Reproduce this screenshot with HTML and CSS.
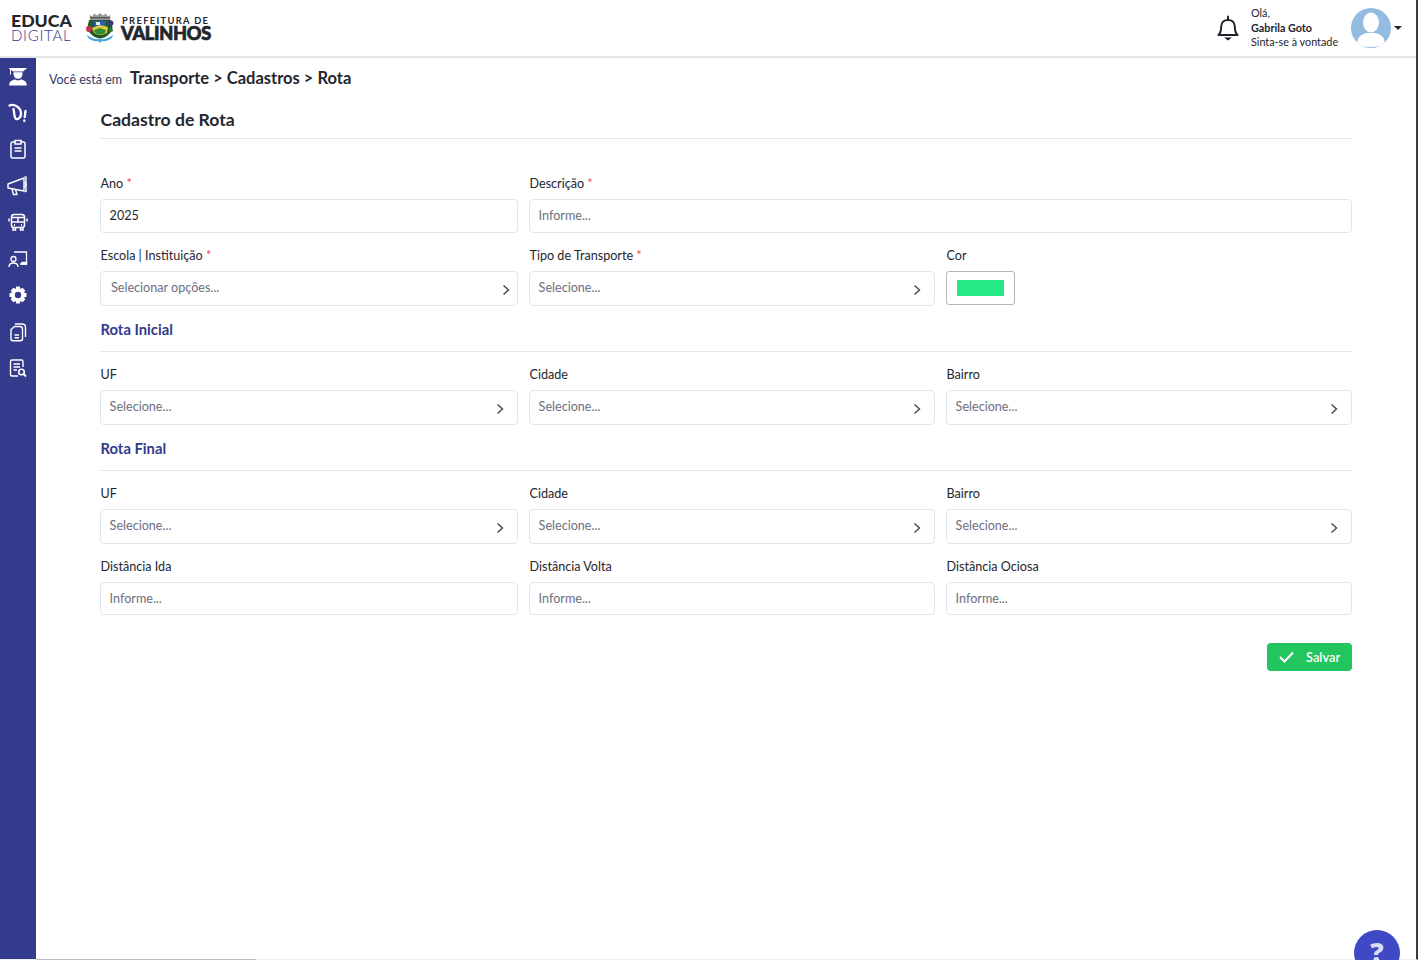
FILE: index.html
```html
<!DOCTYPE html>
<html lang="pt-BR">
<head>
<meta charset="utf-8">
<title>Cadastro de Rota</title>
<link rel="stylesheet" href="styles.css">
</head>
<body>
<header class="topbar">
  <div class="brand">
    <div class="educa"><span class="educa-top">EDUCA</span><span class="educa-bottom">DIGITAL</span></div>
    <svg class="crest" width="28" height="30" viewBox="0 0 28 30">
      <path d="M4 7 L3.500 2 L6.500 3.500 L8 0.500 L11 2.500 L14 0 L17 2.500 L20 0.500 L21.500 3.500 L24.500 2 L24 7 Z" fill="#9a9a9a"/>
      <path d="M4 4 H24 V5.500 H4 Z" fill="#5a5a5a"/>
      <path d="M3 7 H25 L26.500 14 L25 19 Q20 25 14 25.500 Q8 25 3 19 L1.500 14 Z" fill="#1f5a2a"/>
      <path d="M8 8 H20 V15 L14 16 L8 14 Z" fill="#2d5fb0"/>
      <path d="M10 9 H14 V12 H10 Z" fill="#e8eef5"/>
      <path d="M6 15 L14 12 L22 14 L21 20 Q14 24 8 20 Z" fill="#e3cc3a"/>
      <path d="M8 17 L14 15 L20 17 L19 20 Q14 23 9 20 Z" fill="#2f8a3a"/>
      <circle cx="3" cy="16" r="3" fill="#c9304a"/>
      <circle cx="25" cy="10" r="2.500" fill="#4a2f8f"/>
      <circle cx="25" cy="17" r="2" fill="#3a7a35"/>
      <path d="M1 22 Q7 27 14 26 Q21 27 27 22 L26 25 Q20 29 16 28 L14 30 L12 28 Q8 29 2 25 Z" fill="#4aa8e0"/>
    </svg>
    <div class="city"><span class="city-top">PREFEITURA DE</span><span class="city-bottom">VALINHOS</span></div>
  </div>
  <div class="user">
    <svg class="bell" width="24" height="26" viewBox="0 0 24 26" fill="none" stroke="#20212b" stroke-width="2" stroke-linejoin="round">
      <path d="M2.500 20 C5 17.500 5.200 15.500 5.200 11.500 C5.200 7.500 8 5 12 5 C16 5 18.800 7.500 18.800 11.500 C18.800 15.500 19 17.500 21.500 20 Z"/>
      <path d="M12 1.500 V5" stroke-linecap="round"/>
      <path d="M8 22.500 H16 L12 25.500 Z" fill="#20212b" stroke="none"/>
    </svg>
    <div class="greeting">
      <span>Olá,</span>
      <strong>Gabrila Goto</strong>
      <span>Sinta-se à vontade</span>
    </div>
    <svg class="avatar" width="40" height="40" viewBox="0 0 40 40">
      <defs><clipPath id="avatar-clip"><circle cx="20" cy="20" r="20"/></clipPath></defs>
      <circle cx="20" cy="20" r="20" fill="#94bce0"/>
      <g clip-path="url(#avatar-clip)" fill="#fff">
        <ellipse cx="20" cy="14.500" rx="8" ry="10"/>
        <path d="M6 37 C6 29 10 27 15 25 H25 C30 27 34 29 34 37 Q20 41 6 37 Z"/>
      </g>
    </svg>
    <span class="caret"></span>
  </div>
</header>

<div class="shell">
  <nav class="sidebar">
    <svg width="20" height="20" viewBox="0 0 20 20" fill="#fff"><path d="M0.800 2 H19.200 L15 5.500 H5 L3 3.800 V8.500 H2 V3.300 Z"/><path d="M5.500 6.300 H14.500 V8 C14.500 11 12.500 12.800 10 12.800 C7.500 12.800 5.500 11 5.500 8 Z"/><path d="M1.200 19.500 C1.200 15.500 3.500 14.500 7 13.300 C8 14.800 12 14.800 13 13.300 C16.500 14.500 18.800 15.500 18.800 19.500 Z"/></svg>
    <svg width="20" height="20" viewBox="0 0 20 20" fill="none" stroke="#fff" stroke-width="2.300" stroke-linecap="round"><path d="M1.500 2.500 C6 0.500 12.500 4 13 10 C13.300 14 10 17.500 7.500 15.500 C6 14 6.500 10 5.500 6"/><path d="M17.500 8 L16.700 14"/><path d="M16.300 17.500 V18"/></svg>
    <svg width="20" height="20" viewBox="0 0 20 20" fill="none" stroke="#fff" stroke-width="1.500"><rect x="3" y="3" width="14" height="16" rx="1.500"/><path d="M7 1.500 H13 V5 H7 Z" fill="#343a8c"/><path d="M6.500 9 H13.500 M6.500 12 H13.500"/></svg>
    <svg width="22" height="20" viewBox="0 0 22 20" fill="none" stroke="#fff" stroke-width="1.400" stroke-linejoin="round"><path d="M1 8 L17 2 V15 L1 12 Z"/><path d="M5 13 L6.500 18.500 H10 L8.500 13.500"/><path d="M17 6 Q21 8.500 17 11"/><path d="M17.500 1 H19 V15.500 H17.500" /></svg>
    <svg width="20" height="20" viewBox="0 0 20 20" fill="none" stroke="#fff" stroke-width="1.500"><rect x="3.500" y="2.500" width="13" height="13" rx="2.500"/><path d="M3.500 10 H16.500 M3.500 5.500 H16.500 M10 5.500 V10"/><path d="M5 15.500 V18 H7.500 V15.500 M12.500 15.500 V18 H15 V15.500"/><path d="M1 6.500 V9.500 M19 6.500 V9.500"/><path d="M6 13 H7 M13 13 H14" stroke-width="2"/></svg>
    <svg width="20" height="20" viewBox="0 0 20 20" fill="none" stroke="#fff" stroke-width="1.300"><path d="M6 3 H18.500 V15 H12"/><circle cx="5.500" cy="10" r="2.500"/><path d="M1 18 C1 15 3 14 5.500 14 C8 14 10 15 10 18"/><path d="M14 15 H18.500 V13.500 H14 Z" fill="#fff"/></svg>
    <svg width="20" height="20" viewBox="0 0 20 20"><path fill="#fff" fill-rule="evenodd" d="M8.200 1.500 H11.800 L12.400 4 L14.600 2.800 L17.200 5.400 L16 7.600 L18.500 8.200 V11.800 L16 12.400 L17.200 14.600 L14.600 17.200 L12.400 16 L11.800 18.500 H8.200 L7.600 16 L5.400 17.200 L2.800 14.600 L4 12.400 L1.500 11.800 V8.200 L4 7.600 L2.800 5.400 L5.400 2.800 L7.600 4 Z M10 6.800 A3.200 3.200 0 1 0 10 13.200 A3.200 3.200 0 1 0 10 6.800 Z"/></svg>
    <svg width="20" height="20" viewBox="0 0 20 20" fill="none" stroke="#fff" stroke-width="1.400" stroke-linejoin="round"><path d="M7 2 H14 C16.500 2 17.500 3.500 17.500 5.500 V15"/><path d="M3 7.500 L6.500 4.500 H12 C13.500 4.500 14.500 5.500 14.500 7 V17 C14.500 18 13.500 18.800 12.500 18.800 H5 C3.800 18.800 3 18 3 17 Z"/><path d="M6.500 13 H11 M6.500 15.800 H11"/></svg>
    <svg width="20" height="20" viewBox="0 0 20 20" fill="none" stroke="#fff" stroke-width="1.400"><path d="M10 18 H4 C3 18 2.500 17.500 2.500 16.500 V3.500 C2.500 2.500 3 2 4 2 H13.500 C14.500 2 15 2.500 15 3.500 V9"/><path d="M5.500 6 H12 M5.500 9 H12 M5.500 12 H9"/><circle cx="13.500" cy="14" r="2.800" stroke-width="1.600"/><path d="M15.500 16 L18 18.500" stroke-width="1.800"/></svg>
  </nav>

  <main class="content">
    <div class="breadcrumb"><span class="crumb-lead">Você está em</span><span class="crumb-path">Transporte &gt; Cadastros &gt; Rota</span></div>

    <section class="panel">
      <h1 class="title">Cadastro de Rota</h1>

      <div class="grid first">
        <div class="field"><label>Ano <i>*</i></label><div class="control">2025</div></div>
        <div class="field span-2"><label>Descrição <i>*</i></label><div class="control muted">Informe...</div></div>

        <div class="field"><label>Escola | Instituição <i>*</i></label><div class="control select wide muted"><span>Selecionar opções...</span><svg class="chev" width="8" height="12" viewBox="0 0 8 12"><path d="M1.500 1.500 L6.500 6 L1.500 10.500"/></svg></div></div>
        <div class="field"><label>Tipo de Transporte <i>*</i></label><div class="control select muted"><span>Selecione...</span><svg class="chev" width="8" height="12" viewBox="0 0 8 12"><path d="M1.500 1.500 L6.500 6 L1.500 10.500"/></svg></div></div>
        <div class="field"><label>Cor</label><div class="swatch"><span></span></div></div>
      </div>

      <h2 class="section">Rota Inicial</h2>
      <div class="grid">
        <div class="field"><label>UF</label><div class="control select muted"><span>Selecione...</span><svg class="chev" width="8" height="12" viewBox="0 0 8 12"><path d="M1.500 1.500 L6.500 6 L1.500 10.500"/></svg></div></div>
        <div class="field"><label>Cidade</label><div class="control select muted"><span>Selecione...</span><svg class="chev" width="8" height="12" viewBox="0 0 8 12"><path d="M1.500 1.500 L6.500 6 L1.500 10.500"/></svg></div></div>
        <div class="field"><label>Bairro</label><div class="control select muted"><span>Selecione...</span><svg class="chev" width="8" height="12" viewBox="0 0 8 12"><path d="M1.500 1.500 L6.500 6 L1.500 10.500"/></svg></div></div>
      </div>

      <h2 class="section">Rota Final</h2>
      <div class="grid">
        <div class="field"><label>UF</label><div class="control select muted"><span>Selecione...</span><svg class="chev" width="8" height="12" viewBox="0 0 8 12"><path d="M1.500 1.500 L6.500 6 L1.500 10.500"/></svg></div></div>
        <div class="field"><label>Cidade</label><div class="control select muted"><span>Selecione...</span><svg class="chev" width="8" height="12" viewBox="0 0 8 12"><path d="M1.500 1.500 L6.500 6 L1.500 10.500"/></svg></div></div>
        <div class="field"><label>Bairro</label><div class="control select muted"><span>Selecione...</span><svg class="chev" width="8" height="12" viewBox="0 0 8 12"><path d="M1.500 1.500 L6.500 6 L1.500 10.500"/></svg></div></div>
        <div class="field"><label>Distância Ida</label><div class="control short muted">Informe...</div></div>
        <div class="field"><label>Distância Volta</label><div class="control short muted">Informe...</div></div>
        <div class="field"><label>Distância Ociosa</label><div class="control short muted">Informe...</div></div>
      </div>

      <div class="actions">
        <button class="save" type="button">
          <svg width="15" height="12" viewBox="0 0 15 12" fill="none" stroke="#fff" stroke-width="2"><path d="M1 6 L5.500 10.500 L14 1.500"/></svg>
          <span>Salvar</span>
        </button>
      </div>
    </section>
  </main>
</div>

<div class="help"><span>?</span></div>
<div class="hscroll"></div>
</body>
</html>
```
FILE: styles.css
```css
* { box-sizing: border-box; }
html, body { height: 100%; }
body {
  margin: 0;
  height: 960px;
  overflow: hidden;
  display: flex;
  flex-direction: column;
  background: #fff;
  color: #25262e;
  font-family: "Lato", "Noto Sans", sans-serif;
  font-size: 12.600px;
  border-bottom: 1px solid #efefef;
  border-right: 2px solid #3a3a3a;
}

.topbar {
  flex: none;
  height: 58px;
  display: flex;
  align-items: center;
  justify-content: space-between;
  padding: 0 14px 0 11px;
  border-bottom: 2px solid #e5e5e5;
}
.brand { display: flex; align-items: center; }
.educa { display: flex; flex-direction: column; width: 61px; }
.educa-top { font-size: 17.700px; font-weight: 900; color: #25262b; line-height: 14px; }
.educa-bottom { font-size: 15px; font-weight: 300; color: #343a8c; line-height: 14px; letter-spacing: 0.700px; }
.crest { margin-left: 14px; }
.city { display: flex; flex-direction: column; margin-left: 8px; color: #25262b; }
.city-top { font-size: 9.300px; font-weight: 700; letter-spacing: 1.350px; line-height: 11px; }
.city-bottom { font-size: 18.200px; font-weight: 900; line-height: 15px; letter-spacing: -0.300px; margin-left: -1px; -webkit-text-stroke: 0.700px #25262b; }

.user { display: flex; align-items: center; }
.greeting { display: flex; flex-direction: column; margin-left: 11px; width: 100px; font-size: 10.800px; line-height: 14.500px; }
.greeting strong { font-weight: 700; }
.caret { margin-left: 3px; width: 0; height: 0; border: 4px solid transparent; border-top-color: #25262b; border-bottom-width: 0; }

.shell { flex: 1; display: flex; min-height: 0; }
.sidebar {
  flex: none;
  width: 36px;
  background: #343a8c;
  display: flex;
  flex-direction: column;
  align-items: center;
  gap: 16.500px;
  padding-top: 8px;
}
.sidebar svg { flex: none; }

.content { flex: 1; padding: 10px 64px 0 13px; }
.breadcrumb { display: flex; align-items: baseline; height: 20px; line-height: 20px; }
.crumb-lead { font-size: 12.500px; color: #343a66; margin-right: 8px; }
.crumb-path { font-size: 16.500px; font-weight: 700; color: #25262e; }

.panel { padding-left: 51px; }
.title { margin: 20px 0 0; padding: 0 0 6px 0.500px; font-size: 17.600px; line-height: 24px; font-weight: 700; color: #25262e; border-bottom: 1px solid #e3e6ee; }

.grid { display: grid; grid-template-columns: 418px 406px 406px; column-gap: 11px; }
.grid.first { margin-top: 35px; }
.span-2 { grid-column: span 2; }

.field { display: flex; flex-direction: column; padding-bottom: 13px; }
label { height: 20px; line-height: 20px; margin-bottom: 5px; padding-left: 0.500px; font-size: 12.600px; color: #25262e; }
label i { font-style: normal; color: #e8485f; }

.control {
  height: 34px;
  display: flex;
  align-items: center;
  justify-content: space-between;
  padding: 0 12px 2px 8.600px;
  border: 1px solid #e2e5ee;
  border-radius: 4px;
  font-size: 12.600px;
  color: #25262e;
}
.control.select { height: 35px; padding: 0 13px 0 8.600px; }
.control.select span { margin-top: -3px; }
.control.select .chev { margin-top: 2px; }
.control.wide { padding-left: 10px; padding-right: 7px; }
.control.short { height: 33px; padding-bottom: 0; }
.muted { color: #6c6f80; }
.chev { fill: none; stroke: #45464f; stroke-width: 1.400; }

.swatch { width: 69px; height: 34px; padding: 8px 10px; border: 1px solid #b5b5b5; border-radius: 3px; }
.swatch span { display: block; height: 16px; background: #26e884; border-radius: 1px; }

.section { margin: 0 0 13px; padding: 0 0 12px 0.500px; font-size: 14.800px; line-height: 20px; font-weight: 700; color: #343a8c; border-bottom: 1px solid #e3e6ee; }

.actions { display: flex; justify-content: flex-end; margin-top: 15px; }
.save {
  width: 85px;
  height: 28px;
  display: flex;
  align-items: center;
  gap: 12px;
  padding: 0 0 0 12px;
  border: 0;
  border-radius: 4px;
  background: #22c55e;
  color: #fff;
  font: 600 12.800px "Lato", sans-serif;
}

.help {
  position: fixed;
  left: 1354px;
  top: 930px;
  width: 46px;
  height: 46px;
  border-radius: 50%;
  background: #3f49c4;
  color: #d8dcf5;
  text-align: center;
  font-family: "Open Sans", sans-serif;
  font-size: 27px;
  font-weight: 800;
  line-height: 44px;
}
.hscroll {
  position: fixed;
  left: 36px;
  bottom: 0;
  width: 220px;
  height: 1px;
  background: #bdbdbd;
}
```
